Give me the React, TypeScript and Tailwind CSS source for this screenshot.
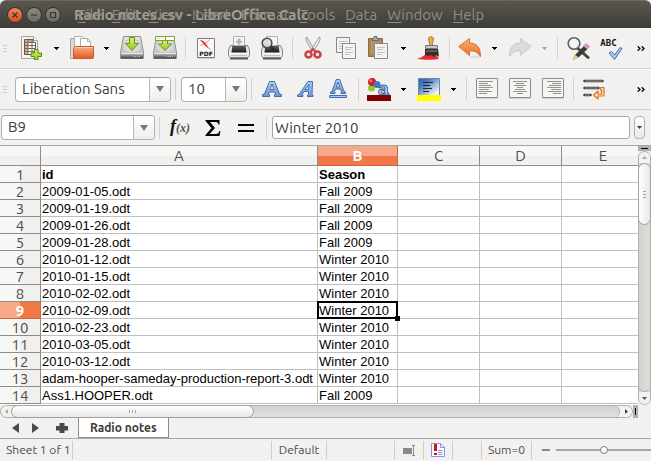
import React, { useState } from "react";

const uiFont = "font-['Ubuntu','Noto_Sans','Open_Sans',sans-serif]";
const cellFont = "font-['Liberation_Sans',Arial,sans-serif]";

type IconProps = { children: React.ReactNode };

function Icon({ children }: IconProps) {
  return (
    <svg viewBox="0 0 24 24" className="block size-6" aria-hidden="true">
      {children}
    </svg>
  );
}

function ToolButton({ label, children }: { label: string; children: React.ReactNode }) {
  return (
    <button type="button" aria-label={label} className="flex h-8 w-[33px] shrink-0 items-center justify-center">
      {children}
    </button>
  );
}

function MenuArrow({ label, disabled = false }: { label: string; disabled?: boolean }) {
  return (
    <button type="button" aria-label={label} disabled={disabled} className="flex h-8 w-[17px] shrink-0 items-center justify-center">
      <svg viewBox="0 0 5 3" className={disabled ? "h-[3px] w-[5px] text-[#aaa8a5]" : "h-[3px] w-[5px] text-black"} aria-hidden="true">
        <path d="M0 0h5v1h-1v1h-1v1h-1v-1h-1v-1h-1z" fill="currentColor" />
      </svg>
    </button>
  );
}

function Separator() {
  return (
    <div className="flex w-2 shrink-0 justify-center">
      <div className="h-[22px] w-px bg-[#d3d0cd]" />
    </div>
  );
}

function Grip() {
  return (
    <div className="flex w-[15px] shrink-0 flex-col gap-[2px] pl-[3px]">
      <div className="h-px w-1 bg-[#d0cdca]" />
      <div className="h-px w-1 bg-[#d0cdca]" />
      <div className="h-px w-1 bg-[#d0cdca]" />
    </div>
  );
}

function More() {
  return (
    <button type="button" aria-label="More tools" className="ml-auto flex h-8 w-5 shrink-0 items-center justify-center">
      <svg viewBox="0 0 8 5" className="h-[5px] w-2" fill="none" stroke="#000" strokeWidth="1.300" aria-hidden="true">
        <path d="M.7.3 3 2.500.7 4.700M4.700.3 7 2.500 4.700 4.700" />
      </svg>
    </button>
  );
}

function Combo({ label, value, options, width }: { label: string; value: string; options: string[]; width: string }) {
  return (
    <div className={`flex h-[25px] shrink-0 overflow-hidden rounded-[4px] border border-[#b4b0ab] border-t-[#9d9994] bg-white ${width}`}>
      <select aria-label={label} defaultValue={value} className="min-w-0 flex-1 appearance-none bg-transparent pl-[6px] text-[15px] text-[#3c3c3c] outline-none">
        {options.map((o) => (
          <option key={o}>{o}</option>
        ))}
      </select>
      <span className="pointer-events-none flex w-[21px] items-center justify-center border-l border-[#bcb8b4] bg-gradient-to-b from-white to-[#efeeec]">
        <svg viewBox="0 0 8 6" className="h-[6px] w-2" aria-hidden="true">
          <path d="M0 0h8L4 6z" fill="#7a7875" />
        </svg>
      </span>
    </div>
  );
}

function Gradients() {
  return (
    <svg className="absolute size-0" aria-hidden="true">
      <defs>
        <linearGradient id="orange" x1="0" y1="0" x2="0" y2="1">
          <stop offset="0" stopColor="#f9b088" />
          <stop offset="1" stopColor="#e4561e" />
        </linearGradient>
        <linearGradient id="undo" x1="0" y1="0" x2="0" y2="1">
          <stop offset="0" stopColor="#fbb072" />
          <stop offset="1" stopColor="#ea6f22" />
        </linearGradient>
        <linearGradient id="green" x1="0" y1="0" x2="0" y2="1">
          <stop offset="0" stopColor="#e2ee6a" />
          <stop offset="1" stopColor="#94c426" />
        </linearGradient>
        <linearGradient id="steel" x1="0" y1="0" x2="0" y2="1">
          <stop offset="0" stopColor="#e6e6e6" />
          <stop offset="1" stopColor="#b8b8b8" />
        </linearGradient>
        <linearGradient id="front" x1="0" y1="0" x2="0" y2="1">
          <stop offset="0" stopColor="#b5b5b5" />
          <stop offset="1" stopColor="#3c3c3c" />
        </linearGradient>
        <linearGradient id="dark" x1="0" y1="0" x2="0" y2="1">
          <stop offset="0" stopColor="#606060" />
          <stop offset="1" stopColor="#202020" />
        </linearGradient>
        <linearGradient id="blue" x1="0" y1="0" x2="0" y2="1">
          <stop offset="0" stopColor="#b3cfee" />
          <stop offset="1" stopColor="#6798d6" />
        </linearGradient>
        <linearGradient id="blueFade" x1="0" y1="0" x2="1" y2="1">
          <stop offset="0" stopColor="#2a5da6" />
          <stop offset=".3" stopColor="#4c7dc0" />
          <stop offset=".85" stopColor="#eef3fa" />
        </linearGradient>
      </defs>
    </svg>
  );
}

const NewSheet = () => (
  <Icon>
    <path d="M1.500.5h12l4 4v18h-16z" fill="#f4f4f2" stroke="#a3a3a0" />
    <path d="M13.500.5v4h4" fill="#fff" stroke="#a3a3a0" />
    <path d="M4.500 3.500h9v3h2v12h-11z" fill="#fff" stroke="#5a5a58" />
    <path d="M5 4h3v14H5zM5 4h8.500v2.500H5z" fill="#f2a572" />
    <path d="M4.500 6.500h11m-11 3h11m-11 3h11m-11 3h11m-7.500-12v15m4-15v15" stroke="#6b6a68" fill="none" />
    <path d="M14.500 13.500h3.500v3.500h3.500v3.500h-3.500v3.500h-3.500v-3.500H11v-3.500h3.500z" fill="url(#green)" stroke="#4e8a0a" />
  </Icon>
);

const OpenFolder = () => (
  <Icon>
    <path d="M.5 22.500v-20h7l2 3v17z" fill="#d9d9d7" stroke="#a5a5a3" />
    <path d="M4.500.5h8l3 3V15h-11z" fill="#fafafa" stroke="#b0b0ae" />
    <path d="M10.500 2.500h7l3 3V15h-10z" fill="#fff" stroke="#b0b0ae" />
    <path d="M17.500 2.500v3h3" fill="none" stroke="#b0b0ae" />
    <path d="M3.500 12.500 5 10.500h18.500v11l-.5 1H3.500z" fill="url(#orange)" stroke="#d0582a" />
    <path d="M5 11.500h18" stroke="#fbc9a6" />
  </Icon>
);

const Drive = () => (
  <>
    <path d="M3.500.5h17l3 16v6H.5v-6z" fill="url(#steel)" stroke="#909090" strokeLinejoin="round" />
    <ellipse cx="12" cy="10" rx="9" ry="7" fill="#dadada" stroke="#c6c6c6" />
    <path d="M1 18h22v4.500H1z" fill="url(#front)" />
    <path d="M1 17.500h22" stroke="#e8e8e8" />
    <path d="M13 20.500h8" stroke="#c4c4c4" strokeDasharray="1 1" />
  </>
);

const Save = () => (
  <Icon>
    <Drive />
    <path d="M9.500 1.500h5v6h4L12 14.500 5.500 7.500h4z" fill="url(#green)" stroke="#5f9a14" />
  </Icon>
);

const SaveAs = () => (
  <Icon>
    <Drive />
    <path d="M9.500 4.500h5v3.500h4L12 14.500 5.500 8h4z" fill="url(#green)" stroke="#5f9a14" />
    <path d="M2.500.5h19v4h-19z" fill="#fff" stroke="#78a530" />
    <path d="M4 2.500h7" stroke="#dbe6c2" />
    <path d="M12.500 1v3" stroke="#78a530" />
  </Icon>
);

const Pdf = () => (
  <Icon>
    <path d="M3 22.500h18" stroke="#cfcfcd" />
    <path d="M3.500 2.500h17v19h-17z" fill="#f8f8f8" stroke="#7d7d7b" />
    <path d="M6.500 9.500C11 8 14 6 15.500 3.500M11 7c1 3 3 5 6 6.500" stroke="#ee8a8a" strokeWidth="1" fill="none" />
    <path d="M6 4c3 0 6 3 8.500 8.500L11 9.500z" fill="#e2282c" />
    <text x="12" y="20" textAnchor="middle" fontSize="6" fontWeight="700" fontFamily="DejaVu Sans" fill="#111">PDF</text>
  </Icon>
);

const PrinterBody = () => (
  <>
    <path d="M3 22.500h18" stroke="#555" strokeWidth="2" />
    <path d="M3.500 9.500h17l2 4.500v5.500l-1.500 2h-18l-1.500-2V14z" fill="#e6e6e5" stroke="#858583" />
    <path d="M5.500 9h13l1 7.500h-15z" fill="url(#dark)" />
    <path d="M6.500.5h11v9h-11z" fill="#f7f7f7" stroke="#b0b0ae" />
    <path d="M2 17.500h20" stroke="#fff" />
    <path d="M4 19.500h16" stroke="#c4c4c2" />
  </>
);

const Print = () => (
  <Icon>
    <PrinterBody />
    <path d="M10.500 2.500h3V5H16l-4 4-4-4h2.500z" fill="#b4b4b2" />
  </Icon>
);

const Preview = () => (
  <Icon>
    <PrinterBody />
    <path d="m10 10 5 5" stroke="#2c2c2c" strokeWidth="2.600" strokeLinecap="round" />
    <circle cx="7" cy="7" r="4.800" fill="#d4d9dd" fillOpacity=".9" stroke="#4c4c4c" strokeWidth="1.600" />
  </Icon>
);

const Cut = () => (
  <Icon>
    <path d="M5.500.8c-1 2-.5 3.500.5 5.500l5.500 9 1.800-2z" fill="#dfe2e0" stroke="#989c9a" />
    <path d="M18.500.8c1 2 .5 3.500-.5 5.500l-5.500 9-1.800-2z" fill="#eef0ef" stroke="#989c9a" />
    <circle cx="7.500" cy="18.500" r="3" fill="none" stroke="#c94448" strokeWidth="2.600" />
    <circle cx="16.500" cy="18.500" r="3" fill="none" stroke="#c94448" strokeWidth="2.600" />
    <path d="m9 16 3-3 3 3" stroke="#c94448" strokeWidth="2" fill="none" />
  </Icon>
);

const Page = ({ x, y }: { x: number; y: number }) => (
  <g transform={`translate(${x} ${y})`}>
    <path d="M.5.5h13v15h-13z" fill="#f3f3f2" stroke="#888a87" />
    <path d="M3 4.500h8m-8 2h6m-6 3h8m-8 2h5" stroke="#c0c2bf" />
  </g>
);

const Copy = () => (
  <Icon>
    <Page x={2} y={1} />
    <Page x={8} y={7} />
  </Icon>
);

const Paste = () => (
  <Icon>
    <path d="M1.500 2.500h14v18h-14z" fill="#ad8455" stroke="#8f6c44" />
    <path d="M4 4.500h9V18H4z" fill="#b8926a" />
    <path d="M5.500 2.500H7v-2h3v2h1.500v2h-6z" fill="#aaa" stroke="#6b6b6b" />
    <Page x={7} y={7} />
  </Icon>
);

const Brush = () => (
  <Icon>
    <path d="M0 23c4-1 6-3 9-5l10 1 3 4c-4 1-15 1-22 0z" fill="#ee2832" />
    <path d="M12.500 9.500c.5-3-1-4.500-1-6.500 0-3 5-3 5 0 0 2-1.500 3.500-1 6.500z" fill="#e6ad5a" stroke="#a87930" />
    <path d="M8.500 9.500h12v3h-12z" fill="#c9c9c9" stroke="#777" />
    <path d="M8 13h13l1 8-3-2-2 2-3-2-3 1-3-1z" fill="#32302f" />
    <path d="M9 15h11" stroke="#8a8a8a" />
  </Icon>
);

const Arrow = ({ fill, stroke }: { fill: string; stroke: string }) => (
  <path d="M.7 10.500 11.500 2.500v4.500c7 0 11 4 11 13.500-3-4-5-6-11-5.500v4.500z" fill={fill} stroke={stroke} strokeLinejoin="round" />
);

const Undo = () => (
  <Icon>
    <ellipse cx="17" cy="21" rx="6" ry="1.500" fill="#ddd" />
    <Arrow fill="url(#undo)" stroke="#cd7440" />
  </Icon>
);

const Redo = () => (
  <Icon>
    <g transform="translate(24 0) scale(-1 1)">
      <Arrow fill="#dcdbda" stroke="#cbcac8" />
    </g>
  </Icon>
);

const Find = () => (
  <Icon>
    <path d="m12 12.500 5 4.500" stroke="#444" strokeWidth="2.600" strokeLinecap="round" />
    <path d="m17 17 5 4.500" stroke="#444" strokeWidth="3" strokeLinecap="round" />
    <circle cx="8" cy="7.500" r="5.800" fill="#f4f4f4" stroke="#5c5e5c" strokeWidth="1.600" />
    <path d="m9 19 9-9 3.500 3L12.500 21.500z" fill="#3a3a3a" />
    <path d="m9 19-1.800 4.500 5.300-2z" fill="#f1dc8a" stroke="#a58a3b" strokeWidth=".5" />
    <path d="m17.500 10 2.500-2.500 3.500 3-2.500 2.500z" fill="#dd97cb" stroke="#a96b98" strokeWidth=".6" />
  </Icon>
);

const Spelling = () => (
  <Icon>
    <text x="9.500" y="10" textAnchor="middle" fontSize="9" fontWeight="700" fontFamily="DejaVu Sans Mono" fill="#111">ABC</text>
    <path d="m10 17 2.500-1.500 3 3.500 5.500-7.500 2 1-7.500 11z" fill="#a9c8ec" stroke="#3f6fae" strokeLinejoin="round" />
  </Icon>
);

const Bold = () => (
  <Icon>
    <path d="M2.500 19.500v-2l2-.5L9.500 4.500h5L19.500 17l2 .5v2h-7v-2l1-.5-.7-2H9.200l-.7 2 1 .5v2zM10 12.500h4L12 7z" fill="url(#blue)" stroke="#3f6fae" fillRule="evenodd" strokeLinejoin="round" />
  </Icon>
);

const Italic = () => (
  <Icon>
    <path d="M4.500 19.500v-1.500l2-1L15 4.500h4.500l-.5 13 1 .5v1.500h-5.500v-1.500l1-.5v-3h-4.500l-2 3 1 .5v1.500zM12 12.500h3.500l.5-5z" fill="url(#blue)" stroke="#3f6fae" fillRule="evenodd" strokeLinejoin="round" />
  </Icon>
);

const Underline = () => (
  <Icon>
    <path d="M4.500 16.500v-1.500l1.500-.5L10.300 2.500h3.400L18 14.500l1.500.5v1.500H15v-1.500l.5-.5-1-2.500h-5l-1 2.500.5.5v1.500zM10.200 10h3.600L12 5z" fill="url(#blue)" stroke="#3f6fae" fillRule="evenodd" strokeLinejoin="round" />
    <path d="M3.500 18.500h17v2h-17z" fill="#a9c8ec" stroke="#3f6fae" />
  </Icon>
);

const FontColor = () => (
  <Icon>
    <circle cx="4.500" cy="11" r="3.500" fill="#84d036" />
    <circle cx="5" cy="5" r="4" fill="#d71b22" />
    <circle cx="3.800" cy="3.800" r="1.500" fill="#ea7b7e" />
    <circle cx="10" cy="7.500" r="3.500" fill="#4777b8" />
    <text x="11" y="18" fontSize="19" fontWeight="700" fontFamily="Liberation Sans" fill="#c6daf2" stroke="#3465a4" strokeWidth="1">a</text>
    <path d="M0 18h24v6H0z" fill="#800000" />
  </Icon>
);

const Highlight = () => (
  <Icon>
    <path d="M1.500 1.500h21v17h-21z" fill="url(#blueFade)" stroke="#6a87ae" />
    <path d="M6 5.500h10m-10 3h7m-7 3h9m-9 3h6" stroke="#1c2838" strokeWidth="1.200" />
    <path d="M0 18h24v6H0z" fill="#ffff00" />
  </Icon>
);

const alignments = {
  left: "M4 4.500h14M4 6.500h9M4 8.500h12M4 10.500h14M4 12.500h10M4 14.500h13M4 16.500h8",
  center: "M5 4.500h14M8 6.500h8M6 8.500h12M9 10.500h6M7 12.500h10M5 14.500h14M9 16.500h6",
  right: "M6 4.500h14M11 6.500h9M8 8.500h12M6 10.500h14M10 12.500h10M7 14.500h13M12 16.500h8",
};

const Align = ({ side }: { side: keyof typeof alignments }) => (
  <Icon>
    <path d="M1.500 1.500h21v19h-21z" fill="#f5f5f3" stroke="#8b8e8a" />
    <path d="M1 21.500h22" stroke="#d3d3d1" />
    <path d={alignments[side]} stroke="#92948f" />
  </Icon>
);

const Wrap = () => (
  <Icon>
    <path d="M2.500 4h18M2.500 11h14M2.500 18h6" stroke="#3b3b3b" strokeWidth="2.400" strokeLinecap="round" />
    <path d="M3 4h17M3 11h13M3 18h5" stroke="#999" />
    <path d="M18.500 10.500h3.500v8.500h-6v3L11.500 18l4.500-4v3h3.500v-4h-1z" fill="#fcd9ae" stroke="#dc7a20" strokeWidth="1.200" strokeLinejoin="round" />
  </Icon>
);

const FunctionWizard = () => (
  <Icon>
    <text x="2" y="16" fontSize="18" fontStyle="italic" fontWeight="700" fontFamily="Liberation Serif" fill="#111">f</text>
    <text x="8" y="16" fontSize="12" fontStyle="italic" fontWeight="700" fontFamily="Liberation Serif" fill="#55504a">(x)</text>
  </Icon>
);

const Sum = () => (
  <Icon>
    <path d="M4.500 4h14v4.500h-1c-.5-2-1.500-2.500-3-2.500H9l5 6-5.500 6h6.500c2 0 3-1 3.500-3h1l-1 5h-14v-1l6-7-6-7z" fill="#000" />
  </Icon>
);

const Equals = () => (
  <Icon>
    <path d="M4 9h16M4 15h16" stroke="#000" strokeWidth="2" />
  </Icon>
);

const menus = ["File", "Edit", "View", "Insert", "Format", "Tools", "Data", "Window", "Help"];

const rows: [string, string][] = [
  ["id", "Season"],
  ["2009-01-05.odt", "Fall 2009"],
  ["2009-01-19.odt", "Fall 2009"],
  ["2009-01-26.odt", "Fall 2009"],
  ["2009-01-28.odt", "Fall 2009"],
  ["2010-01-12.odt", "Winter 2010"],
  ["2010-01-15.odt", "Winter 2010"],
  ["2010-02-02.odt", "Winter 2010"],
  ["2010-02-09.odt", "Winter 2010"],
  ["2010-02-23.odt", "Winter 2010"],
  ["2010-03-05.odt", "Winter 2010"],
  ["2010-03-12.odt", "Winter 2010"],
  ["adam-hooper-sameday-production-report-3.odt", "Winter 2010"],
  ["Ass1.HOOPER.odt", "Fall 2009"],
];

const selectedRow = 9;
const selectedColumn = "B";

function WindowButton({ label, close = false, children }: { label: string; close?: boolean; children: React.ReactNode }) {
  return (
    <button
      type="button"
      aria-label={label}
      className={`flex size-4 items-center justify-center rounded-full border border-[#33322e] ${
        close ? "bg-gradient-to-b from-[#f4845c] to-[#df4a1c]" : "bg-gradient-to-b from-[#8b8981] to-[#6b6962]"
      }`}
    >
      <svg viewBox="0 0 8 8" className="size-2" fill="none" stroke="#3a3833" strokeWidth="1.200" aria-hidden="true">
        {children}
      </svg>
    </button>
  );
}

function TitleBar() {
  return (
    <header className="flex h-7 items-center rounded-t-[6px] border-t border-[#6d6a61] bg-gradient-to-b from-[#5a574f] to-[#3d3c38] pt-px pl-[7px]">
      <div className="flex shrink-0 gap-[3px]">
        <WindowButton label="Close" close>
          <path d="m1.500 1.500 5 5m0-5-5 5" />
        </WindowButton>
        <WindowButton label="Minimize">
          <path d="M1 4h6" />
        </WindowButton>
        <WindowButton label="Maximize">
          <path d="M1.500 1.500h5v5h-5z" />
        </WindowButton>
      </div>
      <div className="ml-[13px] grid items-center">
        <h1 className="col-start-1 row-start-1 text-[15px] font-bold leading-5 whitespace-nowrap text-[#a19e94]">Radio notes.csv - LibreOffice Calc</h1>
        <nav className="col-start-1 row-start-1 flex gap-[10px] pl-1">
          {menus.map((m) => (
            <button key={m} type="button" className="text-[15px] leading-5 text-[#908d84]">
              <span className="underline underline-offset-2">{m[0]}</span>
              {m.slice(1)}
            </button>
          ))}
        </nav>
      </div>
    </header>
  );
}

const toolbarClass = "flex h-[41px] items-center border-b border-[#d2cfcc] shadow-[inset_0_1px_0_#fbfafa]";

function StandardToolbar() {
  return (
    <div role="toolbar" aria-label="Standard" className={toolbarClass}>
      <Grip />
      <ToolButton label="New"><NewSheet /></ToolButton>
      <MenuArrow label="New options" />
      <ToolButton label="Open"><OpenFolder /></ToolButton>
      <MenuArrow label="Open recent" />
      <ToolButton label="Save"><Save /></ToolButton>
      <ToolButton label="Save as"><SaveAs /></ToolButton>
      <Separator />
      <ToolButton label="Export as PDF"><Pdf /></ToolButton>
      <ToolButton label="Print"><Print /></ToolButton>
      <ToolButton label="Print preview"><Preview /></ToolButton>
      <Separator />
      <ToolButton label="Cut"><Cut /></ToolButton>
      <ToolButton label="Copy"><Copy /></ToolButton>
      <ToolButton label="Paste"><Paste /></ToolButton>
      <MenuArrow label="Paste options" />
      <ToolButton label="Clone formatting"><Brush /></ToolButton>
      <Separator />
      <ToolButton label="Undo"><Undo /></ToolButton>
      <MenuArrow label="Undo history" />
      <ToolButton label="Redo"><Redo /></ToolButton>
      <MenuArrow label="Redo history" disabled />
      <Separator />
      <ToolButton label="Find and replace"><Find /></ToolButton>
      <ToolButton label="Spelling"><Spelling /></ToolButton>
      <More />
    </div>
  );
}

function FormattingToolbar() {
  return (
    <div role="toolbar" aria-label="Formatting" className={toolbarClass}>
      <Grip />
      <Combo label="Font name" value="Liberation Sans" options={["Liberation Sans", "Liberation Serif", "Liberation Mono"]} width="w-[156px]" />
      <div className="mr-[2px]"><Separator /></div>
      <Combo label="Font size" value="10" options={["8", "9", "10", "11", "12"]} width="w-[66px]" />
      <Separator />
      <ToolButton label="Bold"><Bold /></ToolButton>
      <ToolButton label="Italic"><Italic /></ToolButton>
      <ToolButton label="Underline"><Underline /></ToolButton>
      <Separator />
      <ToolButton label="Font color"><FontColor /></ToolButton>
      <MenuArrow label="Font color options" />
      <ToolButton label="Background color"><Highlight /></ToolButton>
      <MenuArrow label="Background color options" />
      <Separator />
      <ToolButton label="Align left"><Align side="left" /></ToolButton>
      <ToolButton label="Align center"><Align side="center" /></ToolButton>
      <ToolButton label="Align right"><Align side="right" /></ToolButton>
      <Separator />
      <ToolButton label="Wrap text"><Wrap /></ToolButton>
      <More />
    </div>
  );
}

function FormulaBar() {
  const [formula, setFormula] = useState("Winter 2010");
  return (
    <div className="flex h-[35px] items-center pr-[6px] pl-px">
      <Combo label="Name box" value="B9" options={["B9", "A1"]} width="w-[154px]" />
      <Separator />
      <ToolButton label="Function wizard"><FunctionWizard /></ToolButton>
      <ToolButton label="Sum"><Sum /></ToolButton>
      <ToolButton label="Function"><Equals /></ToolButton>
      <Separator />
      <input
        aria-label="Formula"
        value={formula}
        onChange={(e) => setFormula(e.target.value)}
        className="ml-[2px] h-[23px] min-w-0 flex-1 rounded-[3px] border border-[#a9a5a0] bg-white pl-[2px] text-[15px] text-[#3c3c3c] outline-none"
      />
      <button type="button" aria-label="Expand formula bar" className="ml-1 flex h-[23px] w-[11px] items-center justify-center rounded-[4px] border border-[#b4b0ab] bg-gradient-to-b from-white to-[#eceae8]">
        <svg viewBox="0 0 5 3" className="h-[3px] w-[5px] shrink-0" aria-hidden="true">
          <path d="M0 0h5L2.500 3z" fill="#3c3c3c" />
        </svg>
      </button>
    </div>
  );
}

function Sheet() {
  const headBg = "bg-[linear-gradient(#f7f7f6_50%,#f1f0ef_50%)]";
  const cellBase = `h-[17px] border-r border-b border-[#bfbfbf] pt-px pr-0 pb-0 pl-px text-[13px] leading-[15px] whitespace-nowrap text-black ${cellFont}`;
  return (
    <table className="w-full table-fixed border-separate border-spacing-0 bg-white">
      <colgroup>
        <col className="w-[41px]" />
        <col className="w-[277px]" />
        <col className="w-20" />
        <col className="w-[82px]" />
        <col className="w-[82px]" />
        <col />
      </colgroup>
      <thead>
        <tr>
          <td className={`h-5 border-r border-b border-[#8f8d8a] p-0 ${headBg}`} />
          {["A", "B", "C", "D", "E"].map((c) => (
            <th
              key={c}
              scope="col"
              className={`h-5 border-b py-0 pr-0 text-[15px] leading-[19px] ${c === "E" ? "pl-[6px]" : "border-r pl-0"} ${
                c === selectedColumn
                  ? "border-[#d0663a] bg-[linear-gradient(#f7a888_50%,#f07746_50%)] font-bold text-white"
                  : `border-[#8f8d8a] font-normal text-[#4c4c4c] ${headBg}`
              }`}
            >
              {c}
            </th>
          ))}
        </tr>
      </thead>
      <tbody>
        {rows.map(([id, season], i) => {
          const n = i + 1;
          const selected = n === selectedRow;
          const weight = n === 1 ? "font-bold" : "";
          return (
            <tr key={id}>
              <th
                scope="row"
                className={`h-[17px] border-r border-b px-0 pt-px pb-0 text-[15px] leading-[15px] ${
                  selected
                    ? "border-[#d0663a] bg-[linear-gradient(90deg,#f7a888_50%,#f07746_50%)] font-bold text-white"
                    : "border-[#8f8d8a] bg-[linear-gradient(90deg,#f7f7f6_50%,#f1f0ef_50%)] font-normal text-[#4c4c4c]"
                }`}
              >
                {n}
              </th>
              <td className={`${cellBase} overflow-hidden ${weight}`}>{id}</td>
              <td className={`${cellBase} ${selected ? "relative" : "overflow-hidden"} ${weight}`}>
                {season}
                {selected && (
                  <span className="absolute -inset-x-px -top-px -bottom-px border-2 border-black">
                    <span className="absolute -right-1 -bottom-1 size-[5px] bg-black" />
                  </span>
                )}
              </td>
              <td className={cellBase} />
              <td className={cellBase} />
              <td className="h-[17px] border-b border-[#bfbfbf] p-0" />
            </tr>
          );
        })}
      </tbody>
    </table>
  );
}

function VerticalScrollbar() {
  return (
    <div className="flex w-[13px] shrink-0 flex-col bg-[#f1f0ee]">
      <div className="flex h-[5px] items-center justify-center bg-[#b3afac]">
        <div className="h-px w-[7px] bg-black" />
      </div>
      <div className="flex flex-1 flex-col rounded-full border border-[#b1ada9] bg-gradient-to-r from-[#d3d1ce] to-[#e0dedb]">
        <button type="button" aria-label="Scroll up" className="flex h-[11px] items-center justify-center rounded-t-full bg-[#f3f2f1]">
          <svg viewBox="0 0 5 3" className="h-[3px] w-[5px]" aria-hidden="true"><path d="M0 3h5L2.500 0z" fill="#aaa" /></svg>
        </button>
        <div className="-mx-px flex h-[62px] flex-col items-center justify-center gap-[2px] rounded-full border border-[#a5a19d] bg-gradient-to-r from-white to-[#e9e7e5]">
          <div className="h-px w-[3px] bg-[#a5a19d]" />
          <div className="h-px w-[3px] bg-[#a5a19d]" />
          <div className="h-px w-[3px] bg-[#a5a19d]" />
        </div>
        <div className="flex-1 rounded-b-full border-b border-[#b1ada9]" />
        <button type="button" aria-label="Scroll down" className="flex h-3 items-center justify-center rounded-b-full bg-[#f3f2f1]">
          <svg viewBox="0 0 5 3" className="h-[3px] w-[5px]" aria-hidden="true"><path d="M0 0h5L2.500 3z" fill="#555" /></svg>
        </button>
      </div>
    </div>
  );
}

function HorizontalScrollbar() {
  return (
    <div className="flex h-[13px] pr-[13px]">
      <div className="flex flex-1 rounded-full border border-[#b1ada9] bg-[#f3f2f1]">
        <button type="button" aria-label="Scroll left" className="flex w-[10px] items-center justify-center">
          <svg viewBox="0 0 3 5" className="h-[5px] w-[3px]" aria-hidden="true"><path d="M3 0v5L0 2.500z" fill="#aaa" /></svg>
        </button>
        <div className="flex flex-1 rounded-full border-r border-[#b1ada9] bg-gradient-to-b from-[#d3d1ce] to-[#e2e0de]">
          <div className="-my-px flex w-[243px] items-center justify-center gap-[2px] rounded-full border border-[#a5a19d] bg-gradient-to-b from-white to-[#e9e7e5]">
            <div className="h-[3px] w-px bg-[#a5a19d]" />
            <div className="h-[3px] w-px bg-[#a5a19d]" />
            <div className="h-[3px] w-px bg-[#a5a19d]" />
          </div>
        </div>
        <button type="button" aria-label="Scroll right" className="flex w-3 items-center justify-center">
          <svg viewBox="0 0 3 5" className="h-[5px] w-[3px]" aria-hidden="true"><path d="M0 0v5l3-2.500z" fill="#444" /></svg>
        </button>
      </div>
      <div className="flex w-[5px] items-center justify-center bg-[#b3afac]">
        <div className="h-[7px] w-px bg-black" />
      </div>
    </div>
  );
}

function SheetTabs() {
  return (
    <div className="flex h-[21px] items-start border-b border-[#a9a6a3]">
      <div className="flex h-[19px] w-[78px] items-center pl-3">
        <button type="button" aria-label="Previous sheet" className="w-5">
          <svg viewBox="0 0 7 10" className="h-[10px] w-[7px]" aria-hidden="true"><path d="M7 0v10L0 5z" fill="#4a4a4a" /></svg>
        </button>
        <button type="button" aria-label="Next sheet" className="w-6">
          <svg viewBox="0 0 7 10" className="h-[10px] w-[7px]" aria-hidden="true"><path d="M0 0v10l7-5z" fill="#4a4a4a" /></svg>
        </button>
        <button type="button" aria-label="Add sheet">
          <svg viewBox="0 0 12 12" className="size-3" aria-hidden="true"><path d="M3.500 1h5v3H12v4.500H8.500V11h-5V8.500H0V4h3.500z" fill="#4a4a4a" /></svg>
        </button>
      </div>
      <button type="button" className="h-5 border border-t-0 border-[#8f8d8a] bg-white px-[11px] text-[12px] leading-5 font-bold text-[#3c3c3c]">Radio notes</button>
    </div>
  );
}

function StatusBar() {
  const part = "flex h-[18px] items-center border-r border-[#cfccc9]";
  return (
    <footer className="flex h-[22px] items-center text-[12px] leading-4 text-[#4c4c4c]">
      <div className={`${part} w-[73px] shrink-0 pl-[6px] whitespace-nowrap`}>Sheet 1 of 1</div>
      <div className={`${part} flex-1`} />
      <div className={`${part} w-[55px] shrink-0 justify-center`}>Default</div>
      <div className={`${part} w-[68px] shrink-0`} />
      <div className={`${part} w-[29px] shrink-0 justify-center`}>
        <svg viewBox="0 0 13 11" className="h-[11px] w-[13px]" aria-hidden="true">
          <path d="M0 3h9v6H0z" fill="#8a8a88" />
          <path d="M9 .5h3m-1.500 0v10m-1.500 0h3" stroke="#8a8a88" fill="none" />
        </svg>
      </div>
      <div className={`${part} w-[29px] shrink-0 justify-center`}>
        <svg viewBox="0 0 14 14" className="size-[14px]" aria-hidden="true">
          <path d="M.5.5h9l4 4v9H.5z" fill="#fff" stroke="#8f8de8" />
          <path d="M9.500.5v4h4M7 7.500h4.500M7 9.500h4.500M7 11.500h4.500" fill="none" stroke="#8f8de8" />
          <path d="M3 1h3v7H3zM3 10h3v2H3z" fill="#e40a12" />
        </svg>
      </div>
      <div className={`${part} w-[29px] shrink-0`} />
      <div className={`${part} w-[50px] shrink-0 justify-center`}>Sum=0</div>
      <div className="flex w-[119px] shrink-0 items-center pl-[10px]">
        <button type="button" aria-label="Zoom out" className="flex h-4 w-[14px] items-center"><span className="h-[2px] w-2 bg-[#8c8a88]" /></button>
        <input
          type="range"
          aria-label="Zoom"
          defaultValue={50}
          className="h-4 min-w-0 flex-1 appearance-none bg-[linear-gradient(#a9a7a5,#a9a7a5)] bg-[length:100%_2px] bg-center bg-no-repeat [&::-webkit-slider-thumb]:size-2 [&::-webkit-slider-thumb]:appearance-none [&::-webkit-slider-thumb]:rounded-full [&::-webkit-slider-thumb]:border [&::-webkit-slider-thumb]:border-[#7d7b79] [&::-webkit-slider-thumb]:bg-white"
        />
      </div>
    </footer>
  );
}

export default function App() {
  return (
    <div className={`min-h-screen bg-[#f2f1f0] ${uiFont}`}>
      <Gradients />
      <TitleBar />
      <StandardToolbar />
      <FormattingToolbar />
      <FormulaBar />
      <div className="flex border-t border-[#a9a6a3]">
        <div className="min-w-0 flex-1 bg-white pb-px">
          <Sheet />
        </div>
        <VerticalScrollbar />
      </div>
      <HorizontalScrollbar />
      <SheetTabs />
      <StatusBar />
    </div>
  );
}
